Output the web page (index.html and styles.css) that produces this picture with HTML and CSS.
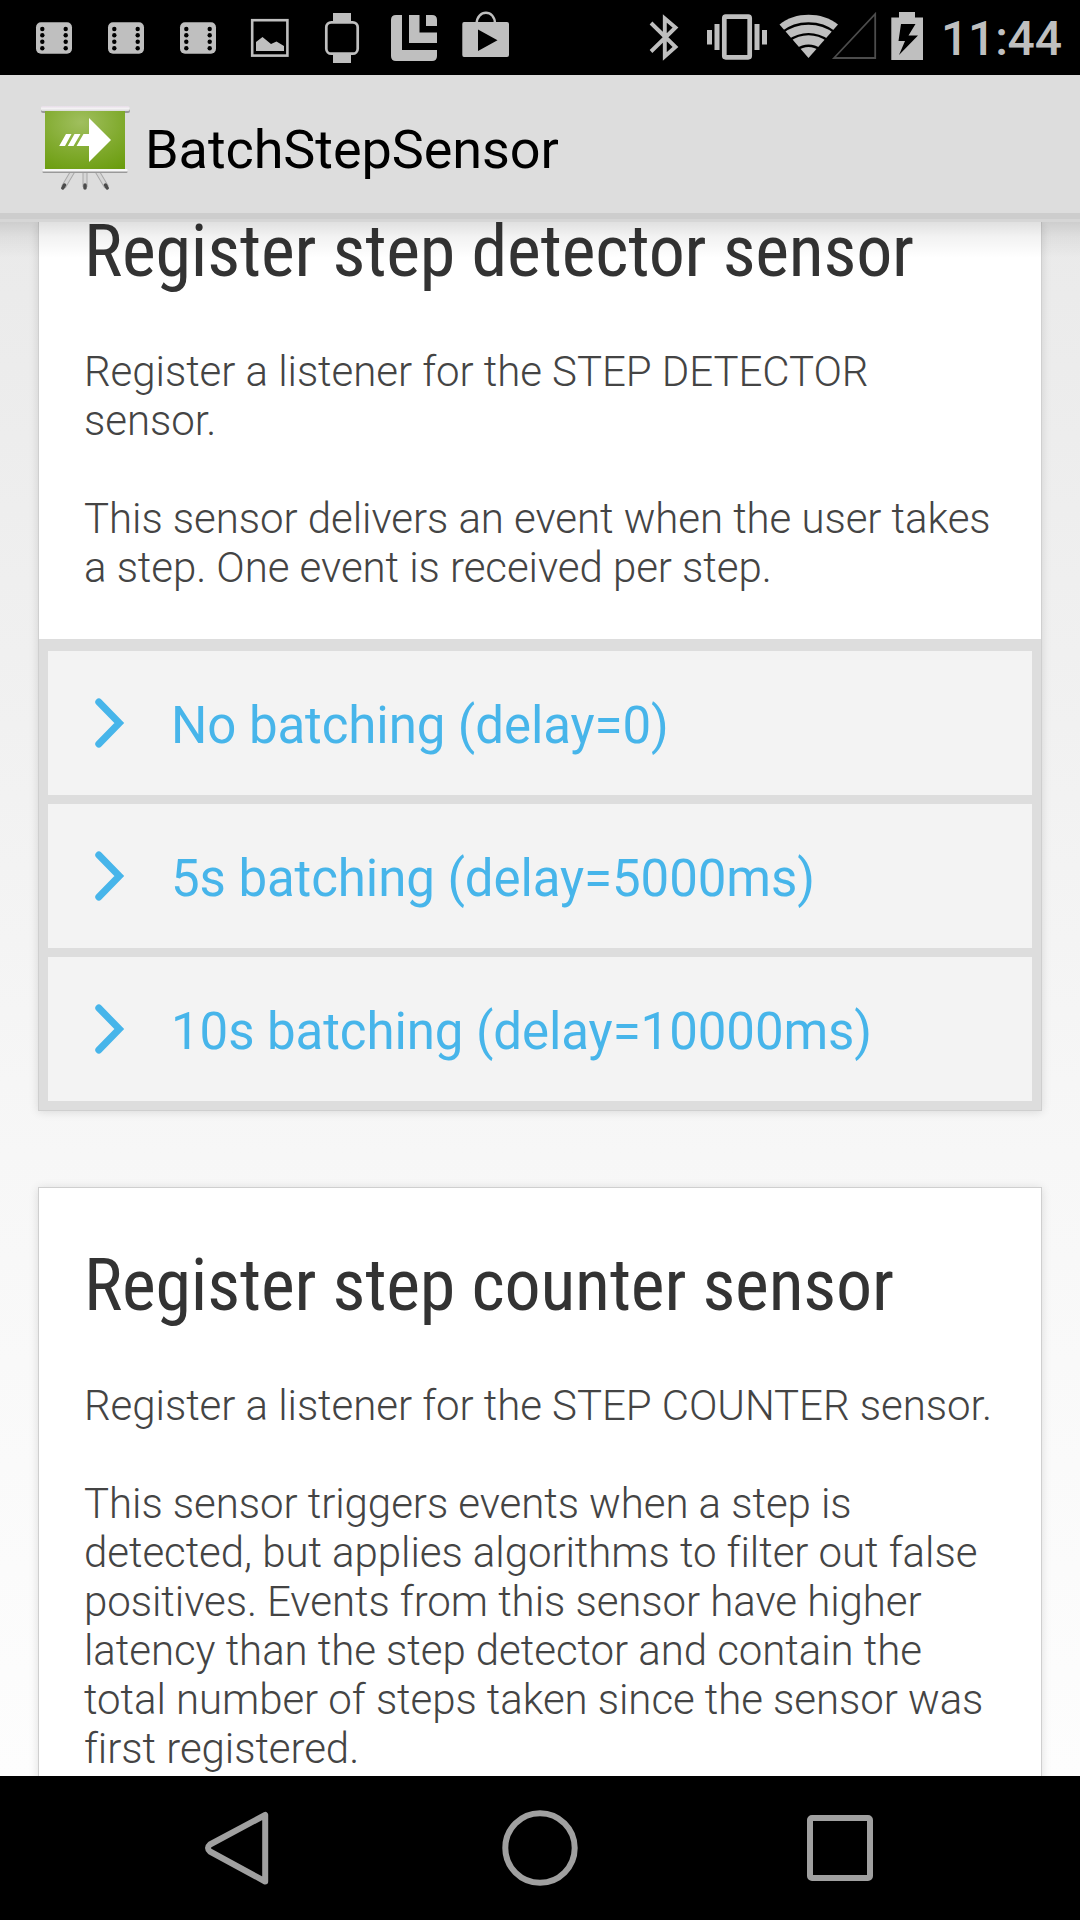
FILE: index.html
```html
<!DOCTYPE html>
<html lang="en">
<head>
<meta charset="utf-8">
<title>BatchStepSensor</title>
<link rel="stylesheet" href="styles.css">
</head>
<body>
<div class="screen">
  <header class="status-bar">
    <div class="status-icons">
      <svg class="slot" viewBox="18 0 72 75"><rect x="36" y="22.3" width="36" height="31.4" rx="5"/><g class="holes"><circle cx="42.3" cy="29" r="2.2"/><circle cx="42.3" cy="35.3" r="2.2"/><circle cx="42.3" cy="41.8" r="2.2"/><circle cx="42.3" cy="48.2" r="2.2"/><circle cx="65.7" cy="29" r="2.2"/><circle cx="65.7" cy="35.3" r="2.2"/><circle cx="65.7" cy="41.8" r="2.2"/><circle cx="65.7" cy="48.2" r="2.2"/></g></svg>
      <svg class="slot" viewBox="18 0 72 75"><rect x="36" y="22.3" width="36" height="31.4" rx="5"/><g class="holes"><circle cx="42.3" cy="29" r="2.2"/><circle cx="42.3" cy="35.3" r="2.2"/><circle cx="42.3" cy="41.8" r="2.2"/><circle cx="42.3" cy="48.2" r="2.2"/><circle cx="65.7" cy="29" r="2.2"/><circle cx="65.7" cy="35.3" r="2.2"/><circle cx="65.7" cy="41.8" r="2.2"/><circle cx="65.7" cy="48.2" r="2.2"/></g></svg>
      <svg class="slot" viewBox="18 0 72 75"><rect x="36" y="22.3" width="36" height="31.4" rx="5"/><g class="holes"><circle cx="42.3" cy="29" r="2.2"/><circle cx="42.3" cy="35.3" r="2.2"/><circle cx="42.3" cy="41.8" r="2.2"/><circle cx="42.3" cy="48.2" r="2.2"/><circle cx="65.7" cy="29" r="2.2"/><circle cx="65.7" cy="35.3" r="2.2"/><circle cx="65.7" cy="41.8" r="2.2"/><circle cx="65.7" cy="48.2" r="2.2"/></g></svg>
      <svg class="slot" viewBox="234 0 72 75"><rect class="line" x="252.2" y="20.2" width="35.2" height="35.4" stroke-width="2.6"/><path d="M256 51V42L262.5 37L271 44L276.500 41.500L284 46V51Z"/></svg>
      <svg class="slot" viewBox="306 0 72 75"><path d="M333 13h18v10h-18zM333 53h18v10h-18z"/><rect class="line" x="326.300" y="22.300" width="31.400" height="31.400" rx="5" stroke-width="2.700"/></svg>
      <svg class="slot" viewBox="378 0 72 75"><path d="M396 15H402V50H437V56Q437 61 432 61H396Q391 61 391 56V20Q391 15 396 15ZM409 15H419.500V32.500H437V43H409ZM426 15H432Q437 15 437 20V26H426Z"/></svg>
      <svg class="slot" viewBox="450 0 72 75"><path class="line" d="M476.500 24C477 9 495 9 495 24" stroke-width="2.400"/><path fill-rule="evenodd" d="M464 22H507Q509 22 509 24V55Q509 57 507 57H464Q462.300 57 462.300 55V24Q462.300 22 464 22ZM478 29.500V51L497.500 40.300Z"/></svg>
    </div>
    <div class="system-icons">
      <svg class="slot" viewBox="628 0 72 75"><path class="line" d="M651 23L675.500 47L664.800 56.500V18.500L675.500 27.500L651 51.500" stroke-width="3.900"/></svg>
      <svg class="slot" viewBox="700 0 72 75"><rect class="line" x="724.300" y="16.700" width="25.400" height="40.600" rx="1.500" stroke-width="4.700"/><path d="M707 30h5v14.500h-5zM714.500 24h5v26h-5zM754.500 24h5v26h-5zM762 30h5v14.500h-5z"/></svg>
      <svg class="network" viewBox="772 0 108 75"><path d="M779.500 24.500C795 11.500 822 11.500 838 24.500L808.500 58Z"/><path class="gap" d="M782 32.500C797 20.500 820 20.500 835 32.500M789 40.500C801 32 816 32 828 40.500M797 49.500C804 44.500 813 44.500 820 49.500" stroke-width="2.400"/><path class="signal" d="M834 58L875.200 14V58Z" stroke-width="1.800"/></svg>
      <svg class="battery" viewBox="880 0 54 75"><path fill-rule="evenodd" d="M899 12H915V17.500H923V60H891.300V17.500H899ZM901 24L898.500 41H905L899 55L918 35.500H908.500L915.500 24Z"/></svg>
      <span class="clock">11:44</span>
    </div>
  </header>

  <div class="action-bar">
    <svg class="app-icon" viewBox="30 95 110 110">
      <defs>
        <radialGradient id="board" cx=".45" cy=".2" r=".95"><stop offset="0" stop-color="#a0bf5e"/><stop offset=".55" stop-color="#80aa2d"/><stop offset="1" stop-color="#689b0b"/></radialGradient>
        <linearGradient id="rail" x1="0" y1="0" x2="0" y2="1"><stop offset="0" stop-color="#e7dce8"/><stop offset=".5" stop-color="#f4f2f4"/><stop offset="1" stop-color="#d9d9d9"/></linearGradient>
      </defs>
      <g class="legs"><path d="M73 171L63.500 187M85 171V187M97 171L106.500 187"/></g>
      <g class="legs-inner"><path d="M73 171L63.500 187M85 171V187M97 171L106.500 187"/></g>
      <path class="feet" d="M64.500 185L62.800 188M85 185V188M105.500 185L107.200 188"/>
      <rect class="shade" x="41" y="109" width="89" height="4" rx="2"/>
      <rect class="shade" x="42.500" y="171" width="85" height="2" rx="1"/>
      <rect x="45" y="110" width="80" height="60" fill="url(#board)"/>
      <rect x="41" y="106" width="88.500" height="5" rx="1.500" fill="url(#rail)"/>
      <rect x="42.500" y="169" width="85" height="2.500" rx="1" fill="#f6f6f6"/>
      <path fill="#fff" d="M89 118L111 140L89 162V146H76.500L83.500 134H89ZM66 134H71.500L65 146H59.200ZM74.500 134H80.500L73.500 146H67.800Z"/>
    </svg>
    <h1 class="app-title">BatchStepSensor</h1>
  </div>

  <main class="content">
    <section class="card card-detector">
      <div class="card-body">
        <h2 class="card-title">Register step detector sensor</h2>
        <p class="card-text">Register a listener for the STEP DETECTOR<br>sensor.<br><br>This sensor delivers an event when the user takes<br>a step. One event is received per step.</p>
      </div>
      <div class="actions">
        <button class="action"><svg class="chevron" viewBox="0 0 36 54"><path d="M7.800 3L28.300 24L7.800 45"/></svg><span>No batching (delay=0)</span></button>
        <button class="action"><svg class="chevron" viewBox="0 0 36 54"><path d="M7.800 3L28.300 24L7.800 45"/></svg><span>5s batching (delay=5000ms)</span></button>
        <button class="action"><svg class="chevron" viewBox="0 0 36 54"><path d="M7.800 3L28.300 24L7.800 45"/></svg><span>10s batching (delay=10000ms)</span></button>
      </div>
    </section>
    <section class="card card-counter">
      <div class="card-body">
        <h2 class="card-title">Register step counter sensor</h2>
        <p class="card-text">Register a listener for the STEP COUNTER sensor.<br><br>This sensor triggers events when a step is<br>detected, but applies algorithms to filter out false<br>positives. Events from this sensor have higher<br>latency than the step detector and contain the<br>total number of steps taken since the sensor was<br>first registered.</p>
      </div>
    </section>
  </main>

  <nav class="nav-bar">
    <svg class="nav-icon" viewBox="190 1776 100 144"><path d="M265.200 1815V1881.500L210 1851.500Q206 1848 210 1844.500Z"/></svg>
    <svg class="nav-icon" viewBox="490 1776 100 144"><circle cx="540" cy="1848" r="34.700"/></svg>
    <svg class="nav-icon" viewBox="790 1776 100 144"><rect x="810" y="1818" width="60" height="60" rx="2"/></svg>
  </nav>
</div>
</body>
</html>
```
FILE: styles.css
```css
* { box-sizing: border-box; }
body { margin: 0; font-family: Roboto, sans-serif; }
h1, h2, p { margin: 0; font-weight: 400; }
svg { display: block; flex: none; }

.screen {
  width: 1080px;
  height: 1920px;
  display: flex;
  flex-direction: column;
  overflow: hidden;
}

/* Status bar */
.status-bar {
  height: 75px;
  flex: none;
  display: flex;
  justify-content: space-between;
  padding: 0 0 0 18px;
  background: #000;
}
.status-icons, .system-icons { display: flex; fill: #bfbfbf; }
.system-icons { width: 452px; }
.slot { width: 72px; height: 75px; }
.network { width: 108px; height: 75px; }
.battery { width: 54px; height: 75px; }
.holes { fill: #000; }
.line { fill: none; stroke: #bfbfbf; }
.gap { fill: none; stroke: #000; }
.signal { fill: none; stroke: #4c4c4c; }
.clock {
  padding-left: 7px;
  font-size: 48px;
  font-weight: 500;
  line-height: 78px;
  letter-spacing: -.2px;
  color: #bfbfbf;
}

/* Action bar */
.action-bar {
  height: 147px;
  flex: none;
  display: flex;
  align-items: flex-start;
  padding: 20px 30px 0;
  background: #ddd;
  border-bottom: 3px solid #d6d6d6;
  box-shadow: inset 0 -6px #cdcdcd;
  position: relative;
  z-index: 1;
}
.action-bar::after {
  content: "";
  position: absolute;
  top: calc(100% + 3px);
  left: 0;
  right: 0;
  height: 36px;
  background: linear-gradient(rgba(0, 0, 0, .12), rgba(0, 0, 0, .05) 40%, transparent);
}
.app-icon { width: 110px; height: 110px; }
.app-title { padding-left: 5px; font-size: 54px; line-height: 110px; letter-spacing: -.07px; color: #000; }
.legs, .legs-inner, .feet { fill: none; stroke-width: 5; stroke: #a9a9a9; }
.legs-inner { stroke-width: 3; stroke: #d6d6d6; }
.feet { stroke: #4b4b4b; stroke-linecap: round; stroke-width: 3.5; }
.shade { fill: #999; }

/* Scrolling content */
.content {
  height: 1554px;
  flex: none;
  display: flex;
  flex-direction: column;
  gap: 76px;
  padding: 0 38px;
  overflow: hidden;
  background: linear-gradient(#eaeaea, #f7f7f7 60%, #fdfdfd);
}
.card {
  flex: none;
  background: #fff;
  border: 1px solid #cfcfcf;
  box-shadow: 0 1px 9px rgba(0, 0, 0, .12);
}
.card-detector { height: 889px; border-top: 0; display: flex; flex-direction: column; justify-content: space-between; }
.card-counter { height: 720px; }
.card-body { padding: 0 45px; }
.card-detector .card-body { margin-top: -5px; }
.card-counter .card-body { padding-top: 63px; }
.card-title {
  font-family: "Roboto Condensed", Roboto, sans-serif;
  font-stretch: 75%;
  font-size: 72px;
  line-height: 70px;
  letter-spacing: -.2px;
  color: #333;
  white-space: nowrap;
}
.card-text {
  padding-top: 60px;
  font-size: 42px;
  font-weight: 300;
  line-height: 49px;
  letter-spacing: -.06px;
  color: #444;
  white-space: nowrap;
}
.actions {
  display: flex;
  flex-direction: column;
  gap: 9px;
  padding: 12px 9px 9px;
  background: #ddd;
}
.action {
  height: 144px;
  display: flex;
  align-items: center;
  gap: 44px;
  padding: 5px 0 0 43px;
  border: 0;
  background: #f3f3f3;
  color: #47b5ea;
  font: 400 51px Roboto, sans-serif;
  letter-spacing: -.08px;
}
.chevron { width: 36px; height: 54px; overflow: visible; fill: none; stroke: #47b5ea; stroke-width: 7; stroke-linecap: round; }

/* Navigation bar */
.nav-bar {
  flex: 1;
  display: flex;
  gap: 200px;
  padding: 0 190px;
  background: #000;
}
.nav-icon { width: 100px; height: 144px; fill: none; stroke: #a0a0a0; stroke-width: 6; stroke-linejoin: round; }
```
